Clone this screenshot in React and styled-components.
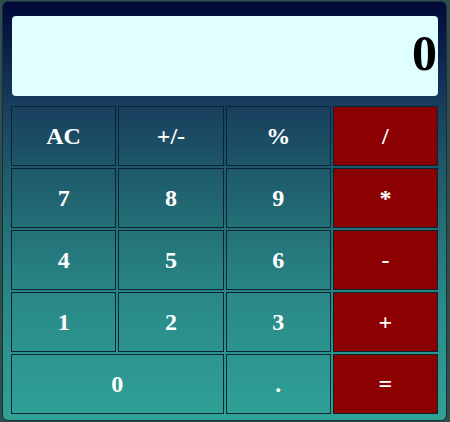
import React, { useState } from 'react'
import styled, { createGlobalStyle } from 'styled-components'

const GlobalStyle = createGlobalStyle`
  html, body {
    margin: 0;
    padding: 0;
    background: #2f4f4f;
    font-family: "Liberation Serif", "Times New Roman", serif;
  }
`

const Calculator = styled.div`
  box-sizing: border-box;
  width: 445px;
  height: 420px;
  margin: 1px 0 0 2px;
  padding: 14px 8px 5px 8px;
  border: 1px solid #1a2e34;
  border-radius: 6px;
  background: linear-gradient(
    to bottom,
    #000838 0%,
    #183f5e 25%,
    #226a73 50%,
    #2a8a88 72%,
    #2fa296 100%
  );
  display: flex;
  flex-direction: column;
  gap: 10px;
`

const Display = styled.div`
  box-sizing: border-box;
  height: 80px;
  margin-left: 1px;
  padding: 0 1px 6px 0;
  background: #e0ffff;
  border-radius: 4px;
  display: flex;
  align-items: center;
  justify-content: flex-end;
  color: #000;
  font-size: 50px;
  font-weight: 700;
`

const Keypad = styled.div`
  display: grid;
  grid-template-columns: repeat(4, 1fr);
  grid-auto-rows: 60px;
  gap: 2px;
`

const Key = styled.button`
  box-sizing: border-box;
  grid-column: span ${p => p.$span || 1};
  border: 1px solid #0b2433;
  border-radius: 0;
  background: ${p => (p.$op ? '#8b0000' : 'transparent')};
  color: #fff;
  font-family: "Liberation Serif", "Times New Roman", serif;
  font-size: 24px;
  font-weight: 700;
  padding: 0;
  cursor: pointer;
`

const keys = [
  { label: 'AC' }, { label: '+/-' }, { label: '%' }, { label: '/', op: true },
  { label: '7' }, { label: '8' }, { label: '9' }, { label: '*', op: true },
  { label: '4' }, { label: '5' }, { label: '6' }, { label: '-', op: true },
  { label: '1' }, { label: '2' }, { label: '3' }, { label: '+', op: true },
  { label: '0', span: 2 }, { label: '.' }, { label: '=', op: true },
]

const App = () => {
  const [value] = useState('0')

  return (
    <>
      <GlobalStyle />
      <Calculator>
        <Display>{ value }</Display>
        <Keypad>
          { keys.map(k => (
            <Key key={ k.label } $op={ k.op } $span={ k.span }>
              { k.label }
            </Key>
          )) }
        </Keypad>
      </Calculator>
    </>
  )
}

export default App
